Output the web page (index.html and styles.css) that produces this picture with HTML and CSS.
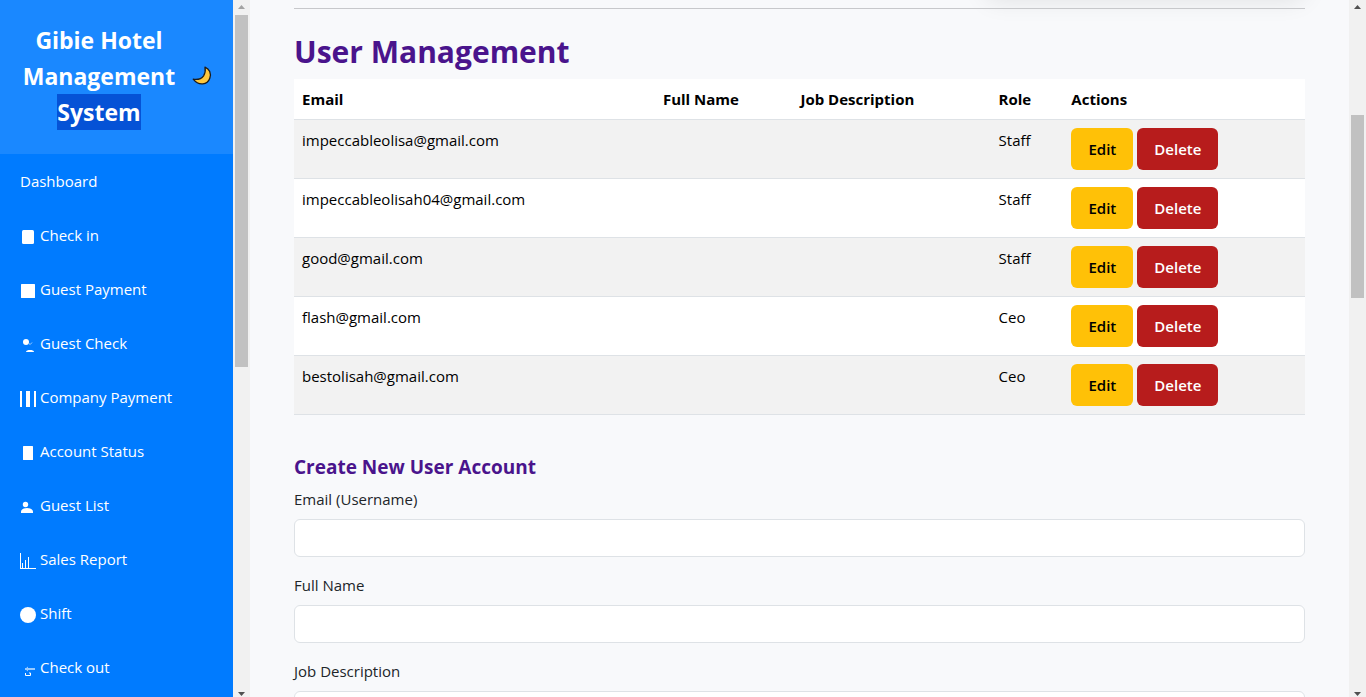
FILE: index.html
```html
<!DOCTYPE html>
<html lang="en">
<head>
<meta charset="utf-8">
<title>Gibie Hotel Management System</title>
<link rel="stylesheet" href="styles.css">
</head>
<body>
<div class="app">
  <aside class="sidebar">
    <header class="brand">
      <h1 class="brand-name">Gibie Hotel Management <mark class="selected">System</mark></h1>
      <button class="theme-toggle" type="button" aria-label="Toggle dark mode">
        <svg class="moon" viewBox="0 0 20 20"><path d="M13 1.200C17.500 3 19.500 7.500 17.800 12.200C15.500 18.800 7 20.500 1.200 13.200C5.500 13.800 9.500 12.800 11.600 9.800C13.400 7 13.500 4 13 1.200Z" fill="#ffc83d" stroke="#1b1b1b" stroke-width="1.300" stroke-linejoin="round"/></svg>
      </button>
    </header>
    <nav class="nav">
      <a class="nav-link" href="#">Dashboard</a>
      <a class="nav-link" href="#"><svg class="icon" viewBox="0 0 16 16"><rect x="2" y="1" width="12" height="14" rx="1.500"/></svg>Check in</a>
      <a class="nav-link" href="#"><svg class="icon" viewBox="0 0 16 16"><rect x="1" y="1" width="14" height="14" rx="0.500"/></svg>Guest Payment</a>
      <a class="nav-link" href="#"><svg class="icon" viewBox="0 0 16 16"><circle cx="6" cy="5" r="3"/><path d="M9 6.500l1.200 1L12 5.500" fill="none" stroke="#fff" stroke-width="0.600"/><path d="M6 15C6 13.500 8 13 10 13S14 13.500 14 15Z"/></svg>Guest Check</a>
      <a class="nav-link" href="#"><svg class="icon" viewBox="0 0 16 16"><path d="M0 0h2v16H0zM6 0h4v16H6zM14 0h2v16h-2z"/></svg>Company Payment</a>
      <a class="nav-link" href="#"><svg class="icon" viewBox="0 0 16 16"><rect x="3" y="1" width="10" height="14" rx="0.500"/></svg>Account Status</a>
      <a class="nav-link" href="#"><svg class="icon" viewBox="0 0 16 16"><circle cx="5.500" cy="5.500" r="2.700"/><path d="M1 14v-1C1 10.500 3.500 9 7 9s6 1.500 6 4v1z"/></svg>Guest List</a>
      <a class="nav-link" href="#"><svg class="icon" viewBox="0 0 16 16"><path d="M0 0h1v15h15v1H0zM2 10h1v5H2zM5 7h1v8H5zM8 4h1v11H8z"/></svg>Sales Report</a>
      <a class="nav-link" href="#"><svg class="icon" viewBox="0 0 16 16"><circle cx="8" cy="8" r="8"/></svg>Shift</a>
      <a class="nav-link" href="#"><svg class="icon" viewBox="0 0 16 16"><path d="M5 7h10v2H5zM8 5.500v5L5 8z" opacity="0.600"/><path d="M5.500 12v2.500h5V12H9" fill="none" stroke="#fff"/></svg>Check out</a>
    </nav>
  </aside>
  <div class="scrollbar" aria-hidden="true">
    <svg class="arrow arrow-off" viewBox="0 0 17 15"><path d="M5 9h7L8.500 5z"/></svg>
    <div class="track"><div class="thumb thumb-menu"></div></div>
    <svg class="arrow" viewBox="0 0 17 15"><path d="M5 10h7l-3.500 4z"/></svg>
  </div>
  <main class="content">
    <div class="card"></div>
    <hr class="rule">
    <h2 class="title">User Management</h2>
    <table class="users">
      <colgroup><col class="c-email"><col class="c-name"><col class="c-job"><col class="c-role"><col class="c-actions"></colgroup>
      <thead>
        <tr><th>Email</th><th>Full Name</th><th>Job Description</th><th>Role</th><th>Actions</th></tr>
      </thead>
      <tbody>
        <tr><td>impeccableolisa@gmail.com</td><td></td><td></td><td>Staff</td><td><div class="actions"><button class="btn edit" type="button">Edit</button><button class="btn delete" type="button">Delete</button></div></td></tr>
        <tr><td>impeccableolisah04@gmail.com</td><td></td><td></td><td>Staff</td><td><div class="actions"><button class="btn edit" type="button">Edit</button><button class="btn delete" type="button">Delete</button></div></td></tr>
        <tr><td>good@gmail.com</td><td></td><td></td><td>Staff</td><td><div class="actions"><button class="btn edit" type="button">Edit</button><button class="btn delete" type="button">Delete</button></div></td></tr>
        <tr><td>flash@gmail.com</td><td></td><td></td><td>Ceo</td><td><div class="actions"><button class="btn edit" type="button">Edit</button><button class="btn delete" type="button">Delete</button></div></td></tr>
        <tr><td>bestolisah@gmail.com</td><td></td><td></td><td>Ceo</td><td><div class="actions"><button class="btn edit" type="button">Edit</button><button class="btn delete" type="button">Delete</button></div></td></tr>
      </tbody>
    </table>
    <h3 class="subtitle">Create New User Account</h3>
    <form class="form">
      <div class="field"><label for="email">Email (Username)</label><input id="email" type="email"></div>
      <div class="field"><label for="fullname">Full Name</label><input id="fullname" type="text"></div>
      <div class="field"><label for="job">Job Description</label><input id="job" type="text"></div>
    </form>
  </main>
  <div class="scrollbar" aria-hidden="true">
    <svg class="arrow" viewBox="0 0 17 15"><path d="M5 9h7L8.500 5z"/></svg>
    <div class="track track-page"><div class="thumb thumb-page"></div></div>
    <svg class="arrow" viewBox="0 0 17 15"><path d="M5 10h7l-3.500 4z"/></svg>
  </div>
</div>
</body>
</html>
```
FILE: styles.css
```css
* { box-sizing: border-box; }

body {
  margin: 0;
  font: 15px/24px "Segoe UI", "Open Sans", "Noto Sans", sans-serif;
  color: #212529;
  background: #f8f9fb;
}

.app {
  display: flex;
  height: 100vh;
  overflow: hidden;
}

/* Sidebar */
.sidebar {
  flex: 0 0 233px;
  overflow: hidden;
  background: #007bff;
}

.brand {
  display: flex;
  align-items: center;
  justify-content: space-between;
  padding: 22px 21px 24px 20px;
  background: #1a88ff;
}

.brand-name {
  flex: 0 0 158px;
  margin: 0;
  font-size: 23px;
  line-height: 36px;
  font-weight: 700;
  text-align: center;
  color: #fff;
}

.selected {
  display: inline-block;
  color: #fff;
  background: #0552d6;
}

.theme-toggle {
  display: flex;
  padding: 0;
  border: 0;
  background: none;
}

.moon { width: 20px; height: 20px; }

.nav-link {
  display: flex;
  align-items: center;
  gap: 4px;
  padding: 15px 20px;
  color: #fff;
  text-decoration: none;
}

.icon {
  width: 16px;
  height: 16px;
  margin-top: 4px;
  fill: #fff;
}

/* Scrollbars */
.scrollbar {
  display: flex;
  flex-direction: column;
  flex: 0 0 17px;
  background: #f1f1f1;
}

.arrow {
  width: 17px;
  height: 15px;
  flex: none;
  fill: #505050;
}

.arrow-off { fill: #a3a3a3; }

.track { flex: 1; padding: 0 2px; }
.track-page { padding-top: 100px; }
.thumb { background: #c1c1c1; }
.thumb-menu { height: 352px; }
.thumb-page { height: 183px; }

/* Content */
.content {
  flex: 1;
  min-width: 0;
  padding: 0 44px;
  overflow: hidden;
}

.card {
  width: 320px;
  height: 40px;
  margin: -48px 0 0 auto;
  border-radius: 12px;
  box-shadow: 0 8px 24px rgba(0, 0, 0, 0.1);
}

.rule {
  height: 1px;
  margin: 16px 0 24px;
  border: 0;
  background: #c7c8cb;
}

.title {
  margin: 0 0 8px;
  font-size: 30px;
  line-height: 38px;
  font-weight: 700;
  color: #4a148c;
}

.users {
  width: 100%;
  margin-bottom: 40px;
  table-layout: fixed;
  border-collapse: collapse;
  color: #000;
  background: #fff;
}

.c-email { width: 35.7%; }
.c-name { width: 13.6%; }
.c-job { width: 19.6%; }
.c-role { width: 7.2%; }
.c-actions { width: 23.9%; }

.users th,
.users td {
  padding: 8px;
  border-bottom: 1px solid #dee2e6;
  text-align: left;
  vertical-align: top;
}

.users th { font-weight: 700; }
.users tbody tr:nth-child(odd) { background: #f2f2f2; }

.actions { display: flex; gap: 4px; }

.btn {
  min-width: 62px;
  padding: 8px 16px;
  border: 1px solid transparent;
  border-radius: 6px;
  font: inherit;
  font-weight: 600;
}

.edit { color: #000; background: #ffc107; }
.delete { min-width: 81px; color: #fff; background: #b71c1c; }

.subtitle {
  margin: 0 0 8px;
  font-size: 19px;
  line-height: 24px;
  font-weight: 700;
  color: #4a148c;
}

.field { margin-bottom: 16px; }

.field label {
  display: block;
  margin-bottom: 8px;
}

.field input {
  display: block;
  width: 100%;
  height: 38px;
  padding: 6px 12px;
  border: 1px solid #dee2e6;
  border-radius: 6px;
  font: inherit;
  background: #fff;
}
```
